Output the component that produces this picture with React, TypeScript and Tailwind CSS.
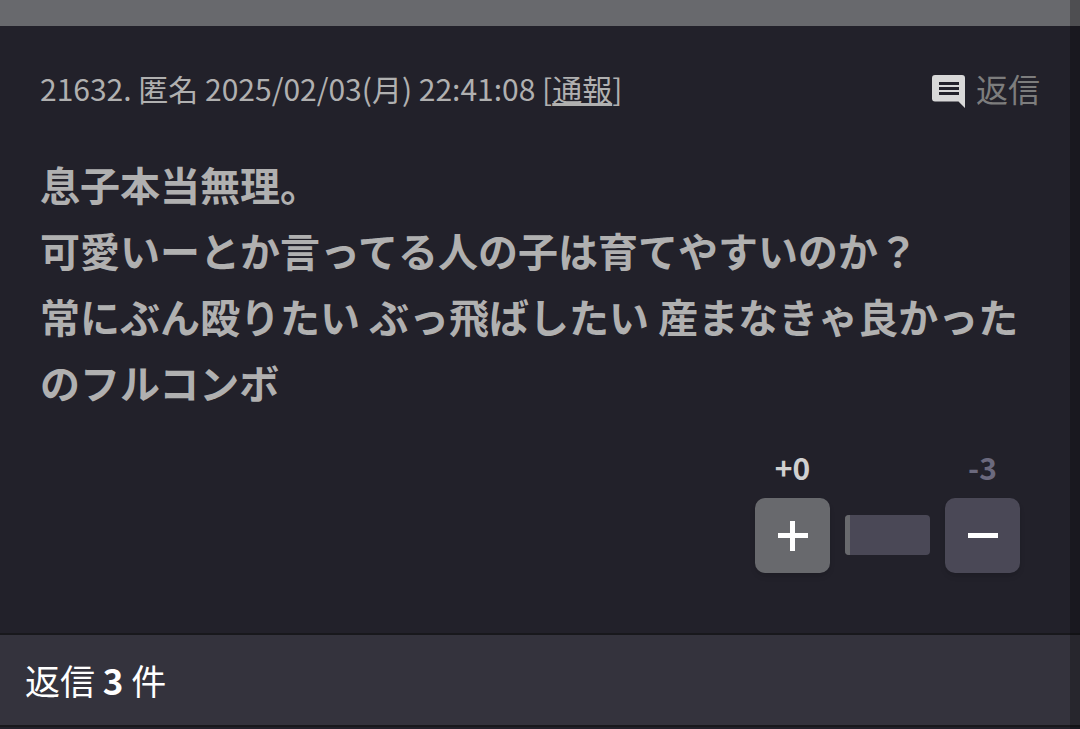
const bodyLines = [
    "息子本当無理。",
    "可愛いーとか言ってる人の子は育てやすいのか？",
    "常にぶん殴りたい ぶっ飛ばしたい 産まなきゃ良かったのフルコンボ",
]

function ReplyIcon() {
    return (
        <svg viewBox="0 0 33 33" className="w-[33px] h-[33px] mb-1" fill="#d8d8d8" aria-hidden="true">
            <path fillRule="evenodd" d="M3 0h27a3 3 0 0 1 3 3V33L26.500 26.500H3a3 3 0 0 1-3-3V3a3 3 0 0 1 3-3zM7 7v3h20V7zM7 12v3h20v-3zM7 17v3h20v-3z"/>
        </svg>
    )
}

function Vote({ plus, minus }: { plus: number, minus: number }) {
    const rate = Math.max(6, (plus / (plus + minus)) * 100)
    return (
        <div className="flex justify-end items-end gap-[15px] pr-10">
            <div className="flex flex-col items-center">
                <span className="text-[30px] leading-[44px] mb-[9px] font-bold text-[#d0d0d0]">+{plus}</span>
                <button aria-label="プラス" className="w-[75px] h-[75px] rounded-[10px] bg-[#68696d] shadow-md flex items-center justify-center cursor-pointer">
                    <svg viewBox="0 0 30 30" className="w-[30px] h-[30px]" fill="#fff" aria-hidden="true">
                        <path d="M12 0h5v12h13v5H17v13h-5V17H0v-5h12z"/>
                    </svg>
                </button>
            </div>
            <div className="w-[85px] h-10 mb-[18px] rounded-[4px] overflow-hidden bg-[#4a4856]">
                <div className="h-full bg-[#68696d]" style={{ width: `${rate}%` }}></div>
            </div>
            <div className="flex flex-col items-center">
                <span className="text-[30px] leading-[44px] mb-[9px] font-bold text-[#6b697d]">-{minus}</span>
                <button aria-label="マイナス" className="w-[75px] h-[75px] rounded-[10px] bg-[#4a4856] shadow-md flex items-center justify-center cursor-pointer">
                    <svg viewBox="0 0 30 30" className="w-[30px] h-[30px]" fill="#fff" aria-hidden="true">
                        <path d="M0 12h30v5H0z"/>
                    </svg>
                </button>
            </div>
        </div>
    )
}

export default function App() {
    return (
        <div className="relative min-h-screen bg-[#22212a] font-['Noto_Sans_CJK_JP',sans-serif]">
            <div className="h-[26px] bg-[#68696d]"></div>
            <article className="px-5 pt-[38px] pb-[60px]">
                <header className="flex justify-between items-center px-5 h-12">
                    <p className="text-[30px] leading-12 text-[#b0b0b0]">
                        21632. 匿名 2025/02/03(月) 22:41:08 [<a href="#report" className="underline">通報</a>]
                    </p>
                    <button className="flex items-end gap-[11px] text-[32px] leading-12 text-[#7d7d7d] cursor-pointer">
                        <ReplyIcon/>
                        返信
                    </button>
                </header>
                <div className="px-5 pt-[39px] pb-[30px] text-[40px] leading-[66px] font-bold text-[#b0b0b0]">
                    {bodyLines.map((line) => (
                        <p key={line}>{line}</p>
                    ))}
                </div>
                <Vote plus={0} minus={3}/>
            </article>
            <section className="border-y-2 border-[#18181c] bg-[#34333d] px-[25px]">
                <h2 className="text-[35px] leading-[90px] text-white">
                    返信 <b>3</b> 件
                </h2>
            </section>
            <div className="absolute top-0 right-0 w-[10px] h-full bg-black/25"></div>
        </div>
    )
}
